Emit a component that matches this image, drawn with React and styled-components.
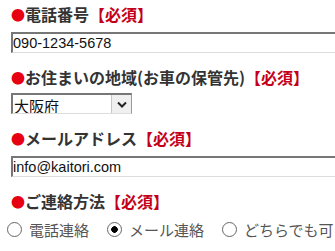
import React from 'react'
import styled, { createGlobalStyle } from 'styled-components'

const GlobalStyle = createGlobalStyle`
  html, body {
    margin: 0;
    background: #fff;
    overflow: hidden;
  }
  body {
    font-family: "Noto Sans CJK JP", "Noto Sans", sans-serif;
  }
`

const Form = styled.div`
  padding: 2px 0 0 11px;
`
const Field = styled.div`
  margin-bottom: 12px;
`
const Label = styled.div`
  display: flex;
  align-items: center;
  height: 24px;
  font-size: 16px;
  font-weight: 700;
  color: #333;
  white-space: nowrap;
`
const Dot = styled.span`
  font-size: 14px;
  color: #e60012;
`
const Required = styled.span`
  color: #c40018;
`
const TextInput = styled.input`
  display: block;
  box-sizing: border-box;
  width: 360px;
  height: 21px;
  margin-top: 6px;
  padding: 0;
  border-top: 2px solid #777;
  border-left: 2px solid #777;
  border-right: 1px solid #ddd;
  border-bottom: 1px solid #ddd;
  font-family: "Liberation Sans", Arial, sans-serif;
  font-size: 14.5px;
  color: #111;
  outline: none;
`
const SelectBox = styled.div`
  display: flex;
  box-sizing: border-box;
  width: 121px;
  height: 21px;
  margin: 4px 0 2px;
  border-top: 2px solid #777;
  border-left: 2px solid #777;
  border-right: 1px solid #999;
  border-bottom: 1px solid #ddd;
`
const Select = styled.select`
  flex: 1;
  min-width: 0;
  appearance: none;
  border: none;
  background: transparent;
  padding: 0 0 0 1px;
  font-family: "Noto Sans CJK JP", sans-serif;
  font-size: 15px;
  color: #111;
  outline: none;
`
const ArrowButton = styled.span`
  display: flex;
  align-items: center;
  justify-content: center;
  box-sizing: border-box;
  width: 20px;
  background: #f0f0f0;
  border-left: 1px solid #c8c8c8;
`
const RadioRow = styled.div`
  display: flex;
  align-items: center;
  height: 24px;
  margin: 4px 0 0 -4px;
  white-space: nowrap;
`
const RadioItem = styled.label`
  display: inline-flex;
  align-items: center;
  gap: 7px;
  margin-right: 18px;
  font-size: 15px;
  color: #555;
`
const Radio = styled.input`
  appearance: none;
  width: 15px;
  height: 15px;
  margin: 0;
  border: 1px solid #666;
  border-radius: 50%;
  background: #fff;
  &:checked {
    background: radial-gradient(circle, #000 0 3px, #fff 3.6px);
  }
`

function Heading({ children }) {
  return (
    <Label>
      <Dot>●</Dot>
      {children}
      <Required>【必須】</Required>
    </Label>
  )
}

export default function App() {
  return (
    <Form>
      <GlobalStyle />
      <Field>
        <Heading>電話番号</Heading>
        <TextInput defaultValue="090-1234-5678" />
      </Field>
      <Field>
        <Heading>お住まいの地域(お車の保管先)</Heading>
        <SelectBox>
          <Select defaultValue="osaka">
            <option value="osaka">大阪府</option>
          </Select>
          <ArrowButton>
            <svg width="10" height="7" viewBox="0 0 10 7">
              <polyline points="1,1.5 5,5.5 9,1.5" fill="none" stroke="#222" strokeWidth="2" />
            </svg>
          </ArrowButton>
        </SelectBox>
      </Field>
      <Field>
        <Heading>メールアドレス</Heading>
        <TextInput defaultValue="info@kaitori.com" />
      </Field>
      <Field>
        <Heading>ご連絡方法</Heading>
        <RadioRow>
          <RadioItem>
            <Radio type="radio" name="contact" />
            電話連絡
          </RadioItem>
          <RadioItem>
            <Radio type="radio" name="contact" defaultChecked />
            メール連絡
          </RadioItem>
          <RadioItem>
            <Radio type="radio" name="contact" />
            どちらでも可
          </RadioItem>
        </RadioRow>
      </Field>
    </Form>
  )
}
